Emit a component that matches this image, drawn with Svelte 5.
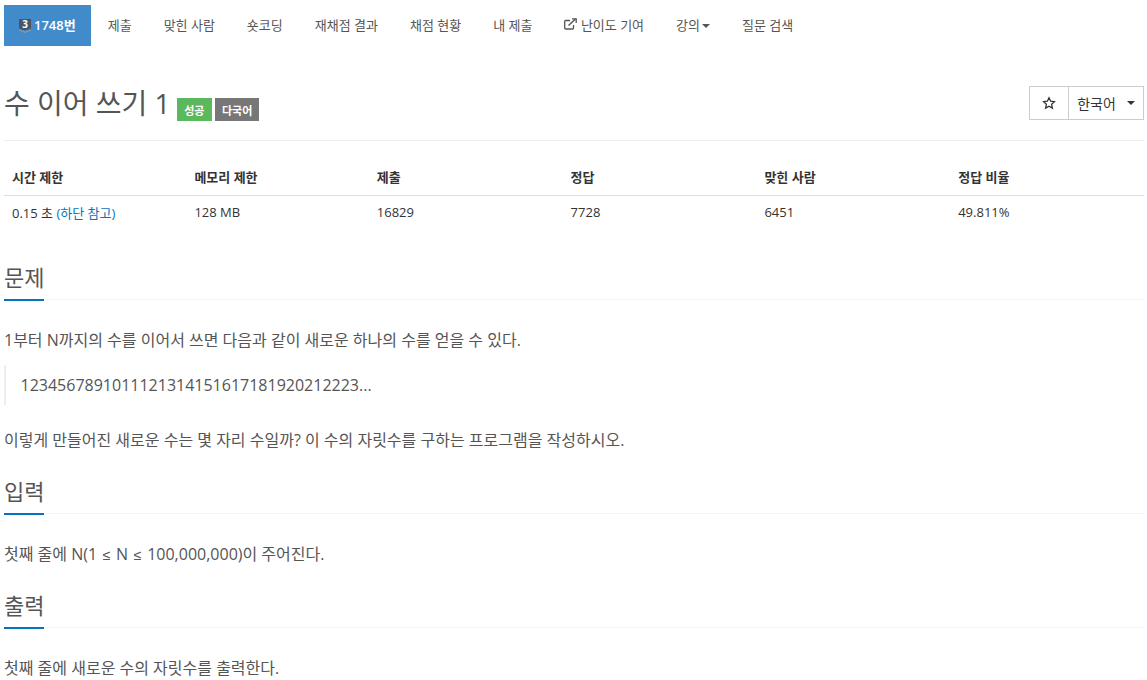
<script>
  const tabs = ['제출', '맞힌 사람', '숏코딩', '재채점 결과', '채점 현황', '내 제출'];

  const stats = ['시간 제한', '메모리 제한', '제출', '정답', '맞힌 사람', '정답 비율'];
  const widths = [16, 16, 17, 17, 17, 17];
  const values = ['128 MB', '16829', '7728', '6451', '49.811%'];
</script>

<div class="page">
  <ul class="tabs">
    <li class="active">
      <a href="#top">
        <svg class="tier" width="14" height="14" viewBox="0 0 14 14">
          <path d="M1 0h12v9.500l-6 2-6-2z" fill="#4a5563" />
          <path d="M1 10.500l6 2 6-2v1.200l-6 2.300-6-2.300z" fill="#8a96a3" />
          <text x="7" y="8.800" text-anchor="middle" class="tier-num">3</text>
        </svg>
        1748번
      </a>
    </li>
    {#each tabs as tab}
      <li><a href="#top">{tab}</a></li>
    {/each}
    <li>
      <a href="#top">
        <svg class="ext" width="13" height="12" viewBox="0 0 13 12" fill="none" stroke="#555" stroke-width="1.3">
          <path d="M9.500 7v3a1 1 0 0 1-1 1h-6.800a1 1 0 0 1-1-1V3.500a1 1 0 0 1 1-1H6" />
          <path d="M4.500 7.500L11.500 1" stroke-width="1.500" />
          <path d="M8 0.800h4.200V5" />
        </svg>
        난이도 기여
      </a>
    </li>
    <li><a href="#top">강의<span class="caret"></span></a></li>
    <li><a href="#top">질문 검색</a></li>
  </ul>

  <div class="title-row">
    <h1>수 이어 쓰기 1</h1>
    <span class="label green">성공</span>
    <span class="label gray">다국어</span>
    <div class="btn-group">
      <button class="star" aria-label="즐겨찾기">
        <svg width="14" height="14" viewBox="0 0 24 24" fill="none" stroke="#333" stroke-width="2.200">
          <path d="M12 3l2.800 6 6.500 0.800-4.800 4.500 1.300 6.500L12 17.500l-5.800 3.300 1.300-6.500-4.800-4.500L9.200 9z" />
        </svg>
      </button>
      <button class="lang">한국어<span class="caret dark"></span></button>
    </div>
  </div>

  <table>
    <thead>
      <tr>
        {#each stats as label, i}
          <th style="width: {widths[i]}%">{label}</th>
        {/each}
      </tr>
    </thead>
    <tbody>
      <tr>
        <td>0.15 초 <a href="#top">(하단 참고)</a></td>
        {#each values as v}
          <td>{v}</td>
        {/each}
      </tr>
    </tbody>
  </table>

  <section>
    <div class="headline"><h2>문제</h2></div>
    <p>1부터 N까지의 수를 이어서 쓰면 다음과 같이 새로운 하나의 수를 얻을 수 있다.</p>
    <blockquote>1234567891011121314151617181920212223...</blockquote>
    <p>이렇게 만들어진 새로운 수는 몇 자리 수일까? 이 수의 자릿수를 구하는 프로그램을 작성하시오.</p>
  </section>

  <section>
    <div class="headline"><h2>입력</h2></div>
    <p>첫째 줄에 N(1 <span class="op">≤</span> N <span class="op">≤</span> 100,000,000)이 주어진다.</p>
  </section>

  <section>
    <div class="headline"><h2>출력</h2></div>
    <p>첫째 줄에 새로운 수의 자릿수를 출력한다.</p>
  </section>
</div>

<style>
  :global(body) {
    font-family: "Open Sans", "Noto Sans CJK KR", sans-serif;
    color: #333;
    background: #fff;
  }

  .page {
    height: 680px;
    overflow: hidden;
    box-sizing: border-box;
    padding: 5px 3px 0 4px;
  }

  a {
    text-decoration: none;
  }

  .tabs {
    display: flex;
    list-style: none;
    margin: 0;
    padding: 0;
    height: 41px;
    font-size: 13px;
  }

  .tabs a {
    display: flex;
    align-items: center;
    box-sizing: border-box;
    height: 41px;
    padding: 0 16px 3px;
    color: #555;
    white-space: nowrap;
  }

  .tabs .active {
    margin-right: 1px;
  }

  .tabs .active a {
    background: #428bca;
    color: #fff;
    font-weight: 600;
    padding: 0 15px 3px 14px;
    gap: 2px;
  }

  .tier {
    flex: none;
    margin-top: 4px;
    overflow: visible;
  }

  .tier-num {
    font-size: 10px;
    font-weight: 700;
    fill: #fff;
  }

  .ext {
    margin-right: 3.500px;
  }

  .caret {
    display: inline-block;
    width: 0;
    height: 0;
    margin: 3px 0 0 2px;
    border-top: 4px solid #555;
    border-left: 4px solid transparent;
    border-right: 4px solid transparent;
  }

  .caret.dark {
    border-top-color: #333;
    margin: 0 0 0 11px;
  }

  .title-row {
    display: flex;
    align-items: flex-end;
    margin-top: 40px;
    height: 54px;
    border-bottom: 1px solid #eee;
  }

  h1 {
    margin: 0 6px 19px 0;
    font-size: 28px;
    line-height: 36px;
    font-weight: 400;
    color: #555;
  }

  .label {
    display: flex;
    align-items: center;
    justify-content: center;
    height: 23px;
    margin-bottom: 19px;
    padding: 0 7px;
    margin-right: 3px;
    font-size: 11px;
    font-weight: 700;
    color: #fff;
  }

  .green {
    background: #5cb85c;
    padding: 0 7.500px;
  }

  .gray {
    background: #777;
  }

  .btn-group {
    display: flex;
    margin-left: auto;
    align-self: flex-start;
    height: 34px;
  }

  .btn-group button {
    font: inherit;
    font-size: 14px;
    height: 34px;
    background: #fff;
    border: 1px solid #ccc;
    color: #333;
    padding: 0;
    display: flex;
    align-items: center;
    justify-content: center;
  }

  .star {
    width: 40px;
  }

  .lang {
    width: 76px;
    margin-left: -1px;
  }

  table {
    border-collapse: collapse;
    table-layout: fixed;
    width: 1140px;
    margin-top: 19px;
    font-size: 13px;
  }

  th {
    text-align: left;
    font-weight: 700;
    height: 35px;
    padding: 0 8px 2px;
    box-sizing: border-box;
    border-bottom: 1px solid #ddd;
    color: #333;
  }

  td {
    height: 35px;
    padding: 0 8px 1px;
    box-sizing: border-box;
    color: #333;
  }

  td a {
    color: #0076c0;
  }

  .headline {
    height: 36px;
    margin-top: 23px;
    border-bottom: 1px dotted #e4e9f0;
  }

  table + section .headline {
    margin-top: 33px;
  }

  .headline h2 {
    display: inline-block;
    margin: 0;
    height: 36px;
    font-size: 22px;
    line-height: 28px;
    font-weight: 400;
    color: #555;
    border-bottom: 2px solid #0076c0;
  }

  p {
    margin: 26px 0 0;
    font-size: 16px;
    line-height: 28px;
    color: #555;
  }

  .op {
    font-family: "Liberation Sans", sans-serif;
    font-size: 14px;
    line-height: 0;
    padding: 0 1.500px;
  }

  blockquote {
    margin: 11px 0 0;
    padding: 0 0 0 14.500px;
    height: 40px;
    line-height: 40px;
    border-left: 2px solid #eee;
    font-size: 16px;
    color: #555;
  }

  blockquote + p {
    margin-top: 21px;
  }
</style>
